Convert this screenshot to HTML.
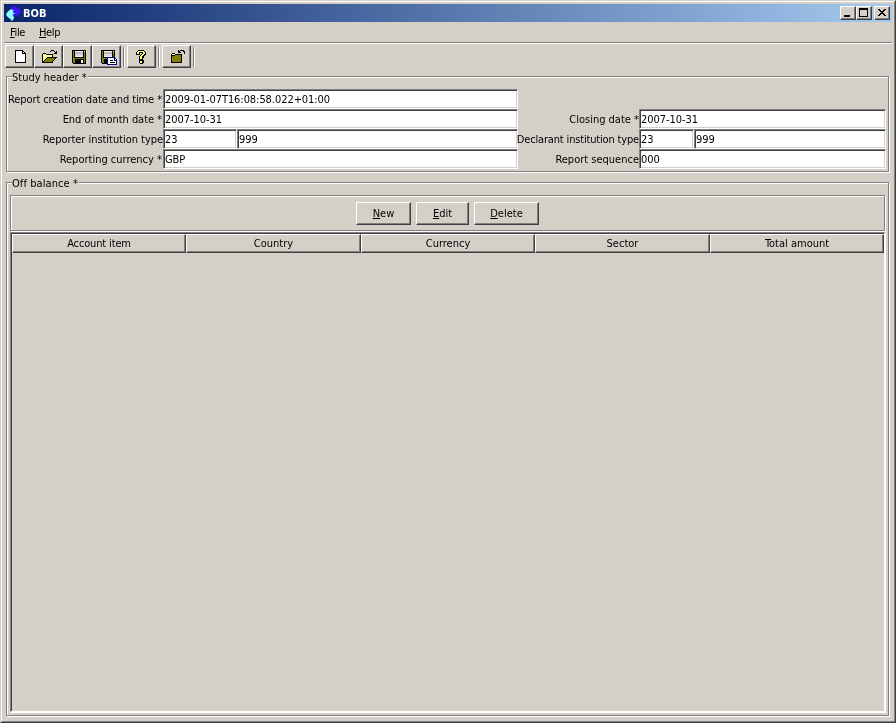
<!DOCTYPE html>
<html lang="en"><head><meta charset="utf-8"><title>BOB</title>
<style>
html,body{margin:0;padding:0}
body{width:896px;height:723px;overflow:hidden;background:#d4d0c8;font-family:"DejaVu Sans Condensed", "Liberation Sans", sans-serif;font-size:11px;color:#000;position:relative;letter-spacing:0px;will-change:transform}
div,span,svg{position:absolute;box-sizing:content-box;white-space:nowrap}
span{position:static}
.w0{left:0;top:0;width:894px;height:721px;border:1px solid;border-color:#d4d0c8 #404040 #404040 #d4d0c8}
.w1{left:1px;top:1px;width:892px;height:719px;border:1px solid;border-color:#fff #808080 #808080 #fff}
.title{left:4px;top:4px;width:888px;height:18px;background:linear-gradient(to right,#0a246a,#a6caf0)}
.title b{position:absolute;left:19px;top:3px;line-height:13px;color:#fff;font-weight:bold;letter-spacing:0}
.cb{top:6px;width:14px;height:12px;background:#d4d0c8;border:1px solid;border-color:#fff #404040 #404040 #fff;box-shadow:inset -1px -1px 0 #808080}
.menu{top:26px;line-height:13px;letter-spacing:-0.35px}
.menu u,.btn u{text-decoration:underline}
.hl-g{left:4px;top:42px;width:888px;height:1px;background:#808080}
.hl-w{left:4px;top:43px;width:888px;height:1px;background:#fff}
.tb{top:45px;width:27px;height:21px;border:1px solid;border-color:#fff #404040 #404040 #fff;box-shadow:inset -1px -1px 0 #808080}
.tsep{top:47px;width:1px;height:20px;background:#808080;border-right:1px solid #fff}
.ic{overflow:visible}
.et-g{border:1px solid #808080}
.et-w{border:1px solid #fff}
.gt{background:#d4d0c8;padding:0 1px 0 0;line-height:13px}
.lbl{text-align:right;line-height:13px}
.fld{height:18px;background:#fff;border:1px solid;border-color:#808080 #fff #fff #808080;box-shadow:inset 1px 1px 0 #404040, inset -1px -1px 0 #d4d0c8;padding:0 1px;line-height:16px;overflow:hidden}
.fld span{position:absolute;left:1px;top:3px;line-height:13px;letter-spacing:-0.06px}
.btn{border:1px solid;border-color:#fff #404040 #404040 #fff;box-shadow:inset -1px -1px 0 #808080;text-align:center}
.btn span{position:absolute;left:0;right:0;top:4px;line-height:13px;text-align:center}
.tbl{left:10px;top:232px;width:873px;height:478px;border-style:solid;border-width:1px 2px 2px 1px;border-color:#808080 #fff #fff #808080;box-shadow:inset 1px 1px 0 #404040}
.hd{top:234px;height:17px;border:1px solid;border-color:#fff #404040 #404040 #fff;box-shadow:inset -1px -1px 0 #808080;text-align:center;line-height:13px}
.hd span{position:absolute;left:0;right:0;top:2px;line-height:13px;text-align:center}
</style></head><body>
<div class="w0"></div><div class="w1"></div>
<div class="title"><b>BOB</b></div>
<svg class="ic" style="left:5px;top:5px" width="18" height="17" viewBox="0 0 18 17">
<defs><filter id="bl" x="-30%" y="-30%" width="160%" height="160%"><feGaussianBlur stdDeviation="0.9"/></filter></defs>
<path d="M6.2 0.8 L10.8 1.2 L16.8 6.2 L12.6 10.8 L7.5 10.8 Z" fill="#3e14ff" filter="url(#bl)"/>
<path d="M6.5 4 L7.5 5.3 L9.1 5.3 L7.5 7 L9.9 8.5 L7.4 9.7 L8.4 11 L9.1 12.9 L8.3 14.6 L6.5 16.3 L6 14.6 L4 13 L2.2 11.5 L0.9 9.5 L1.9 8 L2.8 6.4 L5.2 4.7 Z" fill="#8cffff"/>
</svg>
<div class="cb" style="left:840px"></div><div class="cb" style="left:856px"></div><div class="cb" style="left:874px"></div>
<svg class="ic" style="left:840px;top:6px" width="50" height="14" viewBox="0 0 50 14" shape-rendering="crispEdges">
<rect x="4" y="9" width="6" height="2" fill="#000"/>
<rect x="19" y="2" width="9" height="2" fill="#000"/><rect x="19" y="2" width="1" height="9" fill="#000"/><rect x="27" y="2" width="1" height="9" fill="#000"/><rect x="19" y="10" width="9" height="1" fill="#000"/>
<rect x="38" y="3" width="2" height="1" fill="#000"/><rect x="44" y="3" width="2" height="1" fill="#000"/><rect x="39" y="4" width="2" height="1" fill="#000"/><rect x="43" y="4" width="2" height="1" fill="#000"/><rect x="40" y="5" width="4" height="1" fill="#000"/><rect x="41" y="6" width="2" height="1" fill="#000"/><rect x="40" y="7" width="4" height="1" fill="#000"/><rect x="39" y="8" width="2" height="1" fill="#000"/><rect x="43" y="8" width="2" height="1" fill="#000"/><rect x="38" y="9" width="2" height="1" fill="#000"/><rect x="44" y="9" width="2" height="1" fill="#000"/>
</svg>
<div class="menu" style="left:10px"><u>F</u>ile</div><div class="menu" style="left:39px"><u>H</u>elp</div>
<div class="hl-g"></div><div class="hl-w"></div>
<div class="tb" style="left:5px"></div><div class="tb" style="left:34px"></div><div class="tb" style="left:63px"></div><div class="tb" style="left:92px"></div><div class="tb" style="left:127px"></div><div class="tb" style="left:162px"></div><div class="tsep" style="left:123px"></div><div class="tsep" style="left:158px"></div><div class="tsep" style="left:193px"></div>
<svg class="ic" style="left:15px;top:50px" width="11" height="13" viewBox="0 0 11 13" shape-rendering="crispEdges"><rect x="0" y="0" width="8" height="1" fill="#000000"/><rect x="0" y="1" width="1" height="1" fill="#000000"/><rect x="1" y="1" width="6" height="1" fill="#ffffff"/><rect x="7" y="1" width="2" height="1" fill="#000000"/><rect x="0" y="2" width="1" height="1" fill="#000000"/><rect x="1" y="2" width="6" height="1" fill="#ffffff"/><rect x="7" y="2" width="1" height="1" fill="#000000"/><rect x="8" y="2" width="1" height="1" fill="#ffffff"/><rect x="9" y="2" width="1" height="1" fill="#000000"/><rect x="0" y="3" width="1" height="1" fill="#000000"/><rect x="1" y="3" width="6" height="1" fill="#ffffff"/><rect x="7" y="3" width="4" height="1" fill="#000000"/><rect x="0" y="4" width="1" height="1" fill="#000000"/><rect x="1" y="4" width="9" height="1" fill="#ffffff"/><rect x="10" y="4" width="1" height="1" fill="#000000"/><rect x="0" y="5" width="1" height="1" fill="#000000"/><rect x="1" y="5" width="9" height="1" fill="#ffffff"/><rect x="10" y="5" width="1" height="1" fill="#000000"/><rect x="0" y="6" width="1" height="1" fill="#000000"/><rect x="1" y="6" width="9" height="1" fill="#ffffff"/><rect x="10" y="6" width="1" height="1" fill="#000000"/><rect x="0" y="7" width="1" height="1" fill="#000000"/><rect x="1" y="7" width="9" height="1" fill="#ffffff"/><rect x="10" y="7" width="1" height="1" fill="#000000"/><rect x="0" y="8" width="1" height="1" fill="#000000"/><rect x="1" y="8" width="9" height="1" fill="#ffffff"/><rect x="10" y="8" width="1" height="1" fill="#000000"/><rect x="0" y="9" width="1" height="1" fill="#000000"/><rect x="1" y="9" width="9" height="1" fill="#ffffff"/><rect x="10" y="9" width="1" height="1" fill="#000000"/><rect x="0" y="10" width="1" height="1" fill="#000000"/><rect x="1" y="10" width="9" height="1" fill="#ffffff"/><rect x="10" y="10" width="1" height="1" fill="#000000"/><rect x="0" y="11" width="1" height="1" fill="#000000"/><rect x="1" y="11" width="9" height="1" fill="#ffffff"/><rect x="10" y="11" width="1" height="1" fill="#000000"/><rect x="0" y="12" width="11" height="1" fill="#000000"/></svg>
<svg class="ic" style="left:42px;top:50px" width="15" height="13" viewBox="0 0 15 13" shape-rendering="crispEdges"><rect x="9" y="0" width="3" height="1" fill="#000000"/><rect x="8" y="1" width="1" height="1" fill="#000000"/><rect x="12" y="1" width="1" height="1" fill="#000000"/><rect x="14" y="1" width="1" height="1" fill="#000000"/><rect x="13" y="2" width="2" height="1" fill="#000000"/><rect x="1" y="3" width="3" height="1" fill="#000000"/><rect x="12" y="3" width="3" height="1" fill="#000000"/><rect x="0" y="4" width="1" height="1" fill="#000000"/><rect x="1" y="4" width="3" height="1" fill="#ffff99"/><rect x="4" y="4" width="7" height="1" fill="#000000"/><rect x="0" y="5" width="1" height="1" fill="#000000"/><rect x="1" y="5" width="9" height="1" fill="#ffff99"/><rect x="10" y="5" width="1" height="1" fill="#000000"/><rect x="0" y="6" width="1" height="1" fill="#000000"/><rect x="1" y="6" width="9" height="1" fill="#ffff99"/><rect x="10" y="6" width="1" height="1" fill="#000000"/><rect x="0" y="7" width="1" height="1" fill="#000000"/><rect x="1" y="7" width="4" height="1" fill="#ffff99"/><rect x="5" y="7" width="10" height="1" fill="#000000"/><rect x="0" y="8" width="1" height="1" fill="#000000"/><rect x="1" y="8" width="3" height="1" fill="#ffff99"/><rect x="4" y="8" width="1" height="1" fill="#000000"/><rect x="5" y="8" width="8" height="1" fill="#808000"/><rect x="13" y="8" width="1" height="1" fill="#000000"/><rect x="0" y="9" width="1" height="1" fill="#000000"/><rect x="1" y="9" width="2" height="1" fill="#ffff99"/><rect x="3" y="9" width="1" height="1" fill="#000000"/><rect x="4" y="9" width="8" height="1" fill="#808000"/><rect x="12" y="9" width="1" height="1" fill="#000000"/><rect x="0" y="10" width="1" height="1" fill="#000000"/><rect x="1" y="10" width="1" height="1" fill="#ffff99"/><rect x="2" y="10" width="1" height="1" fill="#000000"/><rect x="3" y="10" width="8" height="1" fill="#808000"/><rect x="11" y="10" width="1" height="1" fill="#000000"/><rect x="0" y="11" width="2" height="1" fill="#000000"/><rect x="2" y="11" width="8" height="1" fill="#808000"/><rect x="10" y="11" width="1" height="1" fill="#000000"/><rect x="0" y="12" width="11" height="1" fill="#000000"/></svg>
<svg class="ic" style="left:72px;top:50px" width="14" height="14" viewBox="0 0 14 14" shape-rendering="crispEdges"><rect x="0" y="0" width="14" height="1" fill="#000000"/><rect x="0" y="1" width="1" height="1" fill="#000000"/><rect x="1" y="1" width="1" height="1" fill="#808000"/><rect x="2" y="1" width="1" height="1" fill="#000000"/><rect x="3" y="1" width="8" height="1" fill="#f2f2f2"/><rect x="11" y="1" width="1" height="1" fill="#000000"/><rect x="12" y="1" width="1" height="1" fill="#ffffff"/><rect x="13" y="1" width="1" height="1" fill="#000000"/><rect x="0" y="2" width="1" height="1" fill="#000000"/><rect x="1" y="2" width="1" height="1" fill="#808000"/><rect x="2" y="2" width="1" height="1" fill="#000000"/><rect x="3" y="2" width="8" height="1" fill="#bcbcb0"/><rect x="11" y="2" width="1" height="1" fill="#000000"/><rect x="12" y="2" width="1" height="1" fill="#808000"/><rect x="13" y="2" width="1" height="1" fill="#000000"/><rect x="0" y="3" width="1" height="1" fill="#000000"/><rect x="1" y="3" width="1" height="1" fill="#808000"/><rect x="2" y="3" width="1" height="1" fill="#000000"/><rect x="3" y="3" width="8" height="1" fill="#bcbcb0"/><rect x="11" y="3" width="1" height="1" fill="#000000"/><rect x="12" y="3" width="1" height="1" fill="#808000"/><rect x="13" y="3" width="1" height="1" fill="#000000"/><rect x="0" y="4" width="1" height="1" fill="#000000"/><rect x="1" y="4" width="1" height="1" fill="#808000"/><rect x="2" y="4" width="1" height="1" fill="#000000"/><rect x="3" y="4" width="8" height="1" fill="#d6d6ee"/><rect x="11" y="4" width="1" height="1" fill="#000000"/><rect x="12" y="4" width="1" height="1" fill="#808000"/><rect x="13" y="4" width="1" height="1" fill="#000000"/><rect x="0" y="5" width="1" height="1" fill="#000000"/><rect x="1" y="5" width="1" height="1" fill="#808000"/><rect x="2" y="5" width="1" height="1" fill="#000000"/><rect x="3" y="5" width="8" height="1" fill="#d6d6ee"/><rect x="11" y="5" width="1" height="1" fill="#000000"/><rect x="12" y="5" width="1" height="1" fill="#808000"/><rect x="13" y="5" width="1" height="1" fill="#000000"/><rect x="0" y="6" width="1" height="1" fill="#000000"/><rect x="1" y="6" width="1" height="1" fill="#808000"/><rect x="2" y="6" width="1" height="1" fill="#000000"/><rect x="3" y="6" width="8" height="1" fill="#f2f2f2"/><rect x="11" y="6" width="1" height="1" fill="#000000"/><rect x="12" y="6" width="1" height="1" fill="#808000"/><rect x="13" y="6" width="1" height="1" fill="#000000"/><rect x="0" y="7" width="1" height="1" fill="#000000"/><rect x="1" y="7" width="1" height="1" fill="#808000"/><rect x="2" y="7" width="10" height="1" fill="#000000"/><rect x="12" y="7" width="1" height="1" fill="#808000"/><rect x="13" y="7" width="1" height="1" fill="#000000"/><rect x="0" y="8" width="1" height="1" fill="#000000"/><rect x="1" y="8" width="12" height="1" fill="#808000"/><rect x="13" y="8" width="1" height="1" fill="#000000"/><rect x="0" y="9" width="1" height="1" fill="#000000"/><rect x="1" y="9" width="2" height="1" fill="#808000"/><rect x="3" y="9" width="9" height="1" fill="#000000"/><rect x="12" y="9" width="1" height="1" fill="#808000"/><rect x="13" y="9" width="1" height="1" fill="#000000"/><rect x="0" y="10" width="1" height="1" fill="#000000"/><rect x="1" y="10" width="2" height="1" fill="#808000"/><rect x="3" y="10" width="6" height="1" fill="#000000"/><rect x="9" y="10" width="2" height="1" fill="#ffffff"/><rect x="11" y="10" width="1" height="1" fill="#000000"/><rect x="12" y="10" width="1" height="1" fill="#808000"/><rect x="13" y="10" width="1" height="1" fill="#000000"/><rect x="0" y="11" width="1" height="1" fill="#000000"/><rect x="1" y="11" width="2" height="1" fill="#808000"/><rect x="3" y="11" width="6" height="1" fill="#000000"/><rect x="9" y="11" width="2" height="1" fill="#ffffff"/><rect x="11" y="11" width="1" height="1" fill="#000000"/><rect x="12" y="11" width="1" height="1" fill="#808000"/><rect x="13" y="11" width="1" height="1" fill="#000000"/><rect x="0" y="12" width="1" height="1" fill="#000000"/><rect x="1" y="12" width="2" height="1" fill="#808000"/><rect x="3" y="12" width="6" height="1" fill="#000000"/><rect x="9" y="12" width="2" height="1" fill="#ffffff"/><rect x="11" y="12" width="1" height="1" fill="#000000"/><rect x="12" y="12" width="1" height="1" fill="#808000"/><rect x="13" y="12" width="1" height="1" fill="#000000"/><rect x="1" y="13" width="13" height="1" fill="#000000"/></svg>
<svg class="ic" style="left:101px;top:50px" width="16" height="15" viewBox="0 0 16 15" shape-rendering="crispEdges"><rect x="0" y="0" width="14" height="1" fill="#000000"/><rect x="0" y="1" width="1" height="1" fill="#000000"/><rect x="1" y="1" width="1" height="1" fill="#808000"/><rect x="2" y="1" width="1" height="1" fill="#000000"/><rect x="3" y="1" width="8" height="1" fill="#f2f2f2"/><rect x="11" y="1" width="1" height="1" fill="#000000"/><rect x="12" y="1" width="1" height="1" fill="#ffffff"/><rect x="13" y="1" width="1" height="1" fill="#000000"/><rect x="0" y="2" width="1" height="1" fill="#000000"/><rect x="1" y="2" width="1" height="1" fill="#808000"/><rect x="2" y="2" width="1" height="1" fill="#000000"/><rect x="3" y="2" width="8" height="1" fill="#bcbcb0"/><rect x="11" y="2" width="1" height="1" fill="#000000"/><rect x="12" y="2" width="1" height="1" fill="#808000"/><rect x="13" y="2" width="1" height="1" fill="#000000"/><rect x="0" y="3" width="1" height="1" fill="#000000"/><rect x="1" y="3" width="1" height="1" fill="#808000"/><rect x="2" y="3" width="1" height="1" fill="#000000"/><rect x="3" y="3" width="8" height="1" fill="#bcbcb0"/><rect x="11" y="3" width="1" height="1" fill="#000000"/><rect x="12" y="3" width="1" height="1" fill="#808000"/><rect x="13" y="3" width="1" height="1" fill="#000000"/><rect x="0" y="4" width="1" height="1" fill="#000000"/><rect x="1" y="4" width="1" height="1" fill="#808000"/><rect x="2" y="4" width="1" height="1" fill="#000000"/><rect x="3" y="4" width="8" height="1" fill="#d6d6ee"/><rect x="11" y="4" width="1" height="1" fill="#000000"/><rect x="12" y="4" width="1" height="1" fill="#808000"/><rect x="13" y="4" width="1" height="1" fill="#000000"/><rect x="0" y="5" width="1" height="1" fill="#000000"/><rect x="1" y="5" width="1" height="1" fill="#808000"/><rect x="2" y="5" width="1" height="1" fill="#000000"/><rect x="3" y="5" width="8" height="1" fill="#d6d6ee"/><rect x="11" y="5" width="1" height="1" fill="#000000"/><rect x="12" y="5" width="1" height="1" fill="#808000"/><rect x="13" y="5" width="1" height="1" fill="#000000"/><rect x="0" y="6" width="1" height="1" fill="#000000"/><rect x="1" y="6" width="1" height="1" fill="#808000"/><rect x="2" y="6" width="1" height="1" fill="#000000"/><rect x="3" y="6" width="8" height="1" fill="#f2f2f2"/><rect x="11" y="6" width="1" height="1" fill="#000000"/><rect x="12" y="6" width="1" height="1" fill="#808000"/><rect x="13" y="6" width="1" height="1" fill="#000000"/><rect x="0" y="7" width="1" height="1" fill="#000000"/><rect x="1" y="7" width="1" height="1" fill="#808000"/><rect x="2" y="7" width="4" height="1" fill="#000000"/><rect x="6" y="7" width="8" height="1" fill="#000080"/><rect x="0" y="8" width="1" height="1" fill="#000000"/><rect x="1" y="8" width="5" height="1" fill="#808000"/><rect x="6" y="8" width="1" height="1" fill="#000080"/><rect x="7" y="8" width="6" height="1" fill="#ffffff"/><rect x="13" y="8" width="2" height="1" fill="#000080"/><rect x="0" y="9" width="1" height="1" fill="#000000"/><rect x="1" y="9" width="2" height="1" fill="#808000"/><rect x="3" y="9" width="3" height="1" fill="#000000"/><rect x="6" y="9" width="1" height="1" fill="#000080"/><rect x="7" y="9" width="6" height="1" fill="#ffffff"/><rect x="13" y="9" width="1" height="1" fill="#000080"/><rect x="14" y="9" width="1" height="1" fill="#ffffff"/><rect x="15" y="9" width="1" height="1" fill="#000080"/><rect x="0" y="10" width="1" height="1" fill="#000000"/><rect x="1" y="10" width="2" height="1" fill="#808000"/><rect x="3" y="10" width="3" height="1" fill="#000000"/><rect x="6" y="10" width="1" height="1" fill="#000080"/><rect x="7" y="10" width="2" height="1" fill="#ffffff"/><rect x="9" y="10" width="3" height="1" fill="#000000"/><rect x="12" y="10" width="1" height="1" fill="#ffffff"/><rect x="13" y="10" width="3" height="1" fill="#000080"/><rect x="0" y="11" width="1" height="1" fill="#000000"/><rect x="1" y="11" width="2" height="1" fill="#808000"/><rect x="3" y="11" width="3" height="1" fill="#000000"/><rect x="6" y="11" width="1" height="1" fill="#000080"/><rect x="7" y="11" width="8" height="1" fill="#ffffff"/><rect x="15" y="11" width="1" height="1" fill="#000080"/><rect x="0" y="12" width="1" height="1" fill="#000000"/><rect x="1" y="12" width="2" height="1" fill="#808000"/><rect x="3" y="12" width="3" height="1" fill="#000000"/><rect x="6" y="12" width="1" height="1" fill="#000080"/><rect x="7" y="12" width="2" height="1" fill="#ffffff"/><rect x="9" y="12" width="5" height="1" fill="#000000"/><rect x="14" y="12" width="1" height="1" fill="#ffffff"/><rect x="15" y="12" width="1" height="1" fill="#000080"/><rect x="1" y="13" width="5" height="1" fill="#000000"/><rect x="6" y="13" width="1" height="1" fill="#000080"/><rect x="7" y="13" width="8" height="1" fill="#ffffff"/><rect x="15" y="13" width="1" height="1" fill="#000080"/><rect x="6" y="14" width="10" height="1" fill="#000080"/></svg>
<svg class="ic" style="left:136px;top:50px" width="11" height="14" viewBox="0 0 11 14" shape-rendering="crispEdges"><rect x="2" y="0" width="6" height="1" fill="#000000"/><rect x="1" y="1" width="1" height="1" fill="#000000"/><rect x="2" y="1" width="6" height="1" fill="#ffff66"/><rect x="8" y="1" width="1" height="1" fill="#000000"/><rect x="0" y="2" width="1" height="1" fill="#000000"/><rect x="1" y="2" width="2" height="1" fill="#ffff66"/><rect x="3" y="2" width="4" height="1" fill="#000000"/><rect x="7" y="2" width="2" height="1" fill="#ffff66"/><rect x="9" y="2" width="1" height="1" fill="#000000"/><rect x="0" y="3" width="1" height="1" fill="#000000"/><rect x="1" y="3" width="2" height="1" fill="#ffff66"/><rect x="3" y="3" width="1" height="1" fill="#000000"/><rect x="6" y="3" width="1" height="1" fill="#000000"/><rect x="7" y="3" width="2" height="1" fill="#ffff66"/><rect x="9" y="3" width="1" height="1" fill="#000000"/><rect x="0" y="4" width="4" height="1" fill="#000000"/><rect x="5" y="4" width="1" height="1" fill="#000000"/><rect x="6" y="4" width="2" height="1" fill="#ffff66"/><rect x="8" y="4" width="2" height="1" fill="#000000"/><rect x="4" y="5" width="1" height="1" fill="#000000"/><rect x="5" y="5" width="2" height="1" fill="#ffff66"/><rect x="7" y="5" width="2" height="1" fill="#000000"/><rect x="3" y="6" width="1" height="1" fill="#000000"/><rect x="4" y="6" width="2" height="1" fill="#ffff66"/><rect x="6" y="6" width="2" height="1" fill="#000000"/><rect x="3" y="7" width="1" height="1" fill="#000000"/><rect x="4" y="7" width="2" height="1" fill="#ffff66"/><rect x="6" y="7" width="2" height="1" fill="#000000"/><rect x="3" y="8" width="1" height="1" fill="#000000"/><rect x="4" y="8" width="2" height="1" fill="#ffff66"/><rect x="6" y="8" width="1" height="1" fill="#000000"/><rect x="3" y="9" width="4" height="1" fill="#000000"/><rect x="3" y="10" width="5" height="1" fill="#000000"/><rect x="3" y="11" width="1" height="1" fill="#000000"/><rect x="4" y="11" width="2" height="1" fill="#ffff66"/><rect x="6" y="11" width="2" height="1" fill="#000000"/><rect x="3" y="12" width="1" height="1" fill="#000000"/><rect x="4" y="12" width="2" height="1" fill="#ffff66"/><rect x="6" y="12" width="2" height="1" fill="#000000"/><rect x="4" y="13" width="3" height="1" fill="#000000"/></svg>
<svg class="ic" style="left:171px;top:50px" width="14" height="13" viewBox="0 0 14 13" shape-rendering="crispEdges"><rect x="7" y="0" width="1" height="1" fill="#000000"/><rect x="9" y="0" width="4" height="1" fill="#000000"/><rect x="7" y="1" width="2" height="1" fill="#000000"/><rect x="12" y="1" width="2" height="1" fill="#000000"/><rect x="7" y="2" width="3" height="1" fill="#000000"/><rect x="13" y="2" width="1" height="1" fill="#000000"/><rect x="1" y="3" width="3" height="1" fill="#000000"/><rect x="13" y="3" width="1" height="1" fill="#000000"/><rect x="0" y="4" width="1" height="1" fill="#000000"/><rect x="1" y="4" width="3" height="1" fill="#ffff99"/><rect x="4" y="4" width="7" height="1" fill="#000000"/><rect x="0" y="5" width="4" height="1" fill="#000000"/><rect x="4" y="5" width="6" height="1" fill="#808000"/><rect x="10" y="5" width="1" height="1" fill="#000000"/><rect x="0" y="6" width="1" height="1" fill="#000000"/><rect x="1" y="6" width="9" height="1" fill="#808000"/><rect x="10" y="6" width="1" height="1" fill="#000000"/><rect x="0" y="7" width="1" height="1" fill="#000000"/><rect x="1" y="7" width="9" height="1" fill="#808000"/><rect x="10" y="7" width="1" height="1" fill="#000000"/><rect x="0" y="8" width="1" height="1" fill="#000000"/><rect x="1" y="8" width="9" height="1" fill="#808000"/><rect x="10" y="8" width="1" height="1" fill="#000000"/><rect x="0" y="9" width="1" height="1" fill="#000000"/><rect x="1" y="9" width="9" height="1" fill="#808000"/><rect x="10" y="9" width="1" height="1" fill="#000000"/><rect x="0" y="10" width="1" height="1" fill="#000000"/><rect x="1" y="10" width="9" height="1" fill="#808000"/><rect x="10" y="10" width="1" height="1" fill="#000000"/><rect x="0" y="11" width="1" height="1" fill="#000000"/><rect x="1" y="11" width="9" height="1" fill="#808000"/><rect x="10" y="11" width="1" height="1" fill="#000000"/><rect x="0" y="12" width="11" height="1" fill="#000000"/></svg>
<div class="et-w" style="left:7px;top:77px;width:881px;height:94px"></div><div class="et-g" style="left:6px;top:76px;width:881px;height:94px"></div>
<div class="gt" style="left:12px;top:71px">Study header *</div>
<div class="lbl" style="left:0;width:162px;top:93px;letter-spacing:-0.1px">Report creation date and time *</div><div class="lbl" style="left:0;width:162px;top:113px;letter-spacing:-0.05px">End of month date *</div><div class="lbl" style="left:0;width:163px;top:133px;letter-spacing:-0.04px">Reporter institution type</div><div class="lbl" style="left:0;width:162px;top:153px">Reporting currency *</div>
<div class="fld" style="left:163px;top:89px;width:351px"><span>2009-01-07T16:08:58.022+01:00</span></div><div class="fld" style="left:163px;top:109px;width:351px"><span>2007-10-31</span></div><div class="fld" style="left:163px;top:129px;width:70px"><span>23</span></div><div class="fld" style="left:237px;top:129px;width:277px"><span>999</span></div><div class="fld" style="left:163px;top:149px;width:351px"><span>GBP</span></div>
<div class="lbl" style="left:0;width:639px;top:113px">Closing date *</div><div class="lbl" style="left:0;width:639px;top:133px;letter-spacing:-0.17px">Declarant institution type</div><div class="lbl" style="left:0;width:639px;top:153px;letter-spacing:0.0px">Report sequence</div>
<div class="fld" style="left:639px;top:109px;width:243px"><span>2007-10-31</span></div><div class="fld" style="left:639px;top:129px;width:51px"><span>23</span></div><div class="fld" style="left:694px;top:129px;width:188px"><span>999</span></div><div class="fld" style="left:639px;top:149px;width:243px"><span>000</span></div>
<div class="et-w" style="left:7px;top:183px;width:881px;height:532px"></div><div class="et-g" style="left:6px;top:182px;width:881px;height:532px"></div>
<div class="gt" style="left:12px;top:177px;letter-spacing:0.08px">Off balance *</div>
<div class="et-w" style="left:11px;top:196px;width:873px;height:34px"></div><div class="et-g" style="left:10px;top:195px;width:873px;height:34px"></div>
<div class="btn" style="left:356px;top:202px;width:53px;height:21px"><span><u>N</u>ew</span></div><div class="btn" style="left:416px;top:202px;width:51px;height:21px"><span><u>E</u>dit</span></div><div class="btn" style="left:474px;top:202px;width:63px;height:21px"><span><u>D</u>elete</span></div>
<div class="tbl"></div>
<div class="hd" style="left:12px;width:172px"><span style="letter-spacing:-0.15px">Account item</span></div><div class="hd" style="left:186px;width:173px"><span>Country</span></div><div class="hd" style="left:361px;width:172px"><span>Currency</span></div><div class="hd" style="left:535px;width:173px"><span>Sector</span></div><div class="hd" style="left:710px;width:172px"><span>Total amount</span></div>
</body></html>
